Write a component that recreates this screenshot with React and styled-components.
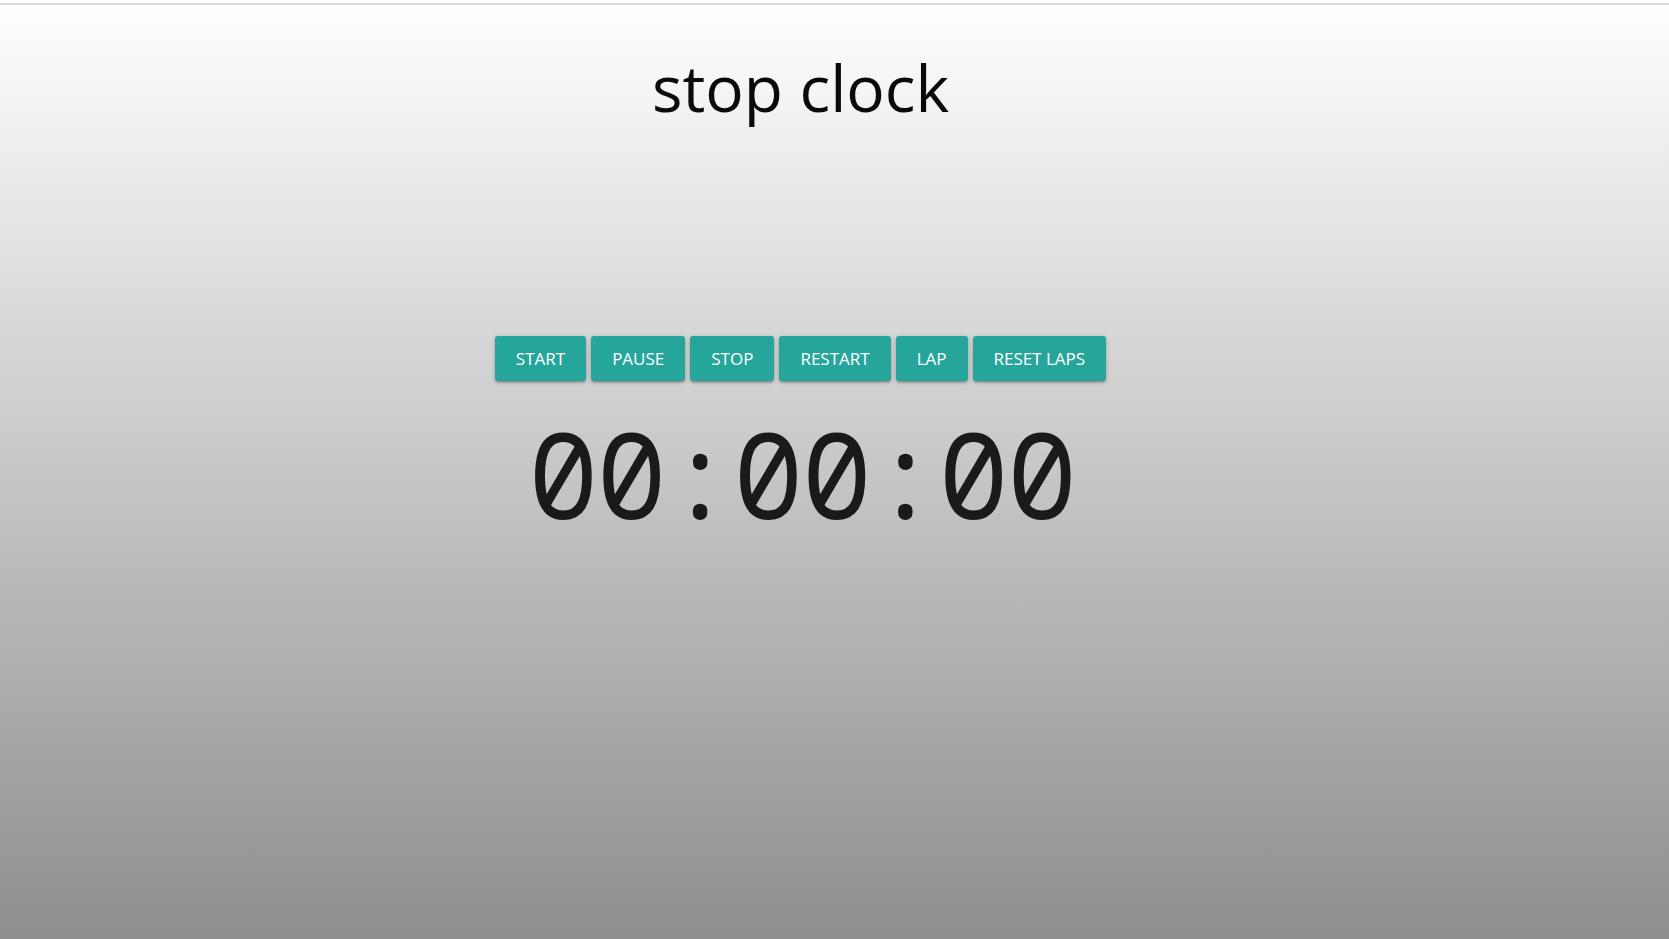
import React, { useState } from 'react';
import styled, { createGlobalStyle } from 'styled-components';

const GlobalStyle = createGlobalStyle`
  html, body {
    margin: 0;
    padding: 0;
  }
  body {
    font-family: "Open Sans", "Noto Sans", sans-serif;
  }
`;

const Page = styled.main`
  min-height: 100vh;
  box-sizing: border-box;
  border-top: 3px solid #ffffff;
  background: linear-gradient(to bottom, #ffffff, #8e8e8e);
  display: flex;
  flex-direction: column;
  align-items: center;
  padding-right: 68px;
  position: relative;

  &::before {
    content: '';
    position: absolute;
    top: 0;
    left: 0;
    right: 0;
    height: 2px;
    background: #d9d9de;
  }
`;

const Title = styled.h1`
  margin: 50px 0 0;
  font-size: 64px;
  font-weight: 400;
  line-height: 1.1;
  color: #0a0a0a;
`;

const Controls = styled.div`
  display: flex;
  gap: 5px;
  margin-top: 213px;
`;

const Button = styled.button`
  height: 45px;
  padding: 0 21px;
  border: none;
  border-radius: 3px;
  background: #26a69a;
  color: #ffffff;
  font-family: "Open Sans", "Noto Sans", sans-serif;
  font-size: 17px;
  text-transform: uppercase;
  cursor: pointer;
  box-shadow: 0 2px 2px 0 rgba(0, 0, 0, 0.14), 0 3px 1px -2px rgba(0, 0, 0, 0.12),
    0 1px 5px 0 rgba(0, 0, 0, 0.2);

  &:hover {
    background: #2bbbad;
  }
`;

const Timer = styled.div`
  margin-top: 22px;
  padding-left: 2px;
  font-family: "Noto Sans Mono", "DejaVu Sans Mono", monospace;
  font-feature-settings: "zero" 1;
  font-variant-numeric: slashed-zero;
  font-size: 118px;
  letter-spacing: -2.4px;
  line-height: 1.2;
  color: #1a1a1a;
`;

const pad = n => String(n).padStart(2, '0');

export default function App() {
  const [time] = useState({ h: 0, m: 0, s: 0 });
  const actions = ['Start', 'Pause', 'Stop', 'Restart', 'Lap', 'Reset laps'];

  return (
    <>
      <GlobalStyle />
      <Page>
        <Title>stop clock</Title>
        <Controls>
          {actions.map(a => (
            <Button key={a}>{a}</Button>
          ))}
        </Controls>
        <Timer>{pad(time.h)}:{pad(time.m)}:{pad(time.s)}</Timer>
      </Page>
    </>
  );
}
